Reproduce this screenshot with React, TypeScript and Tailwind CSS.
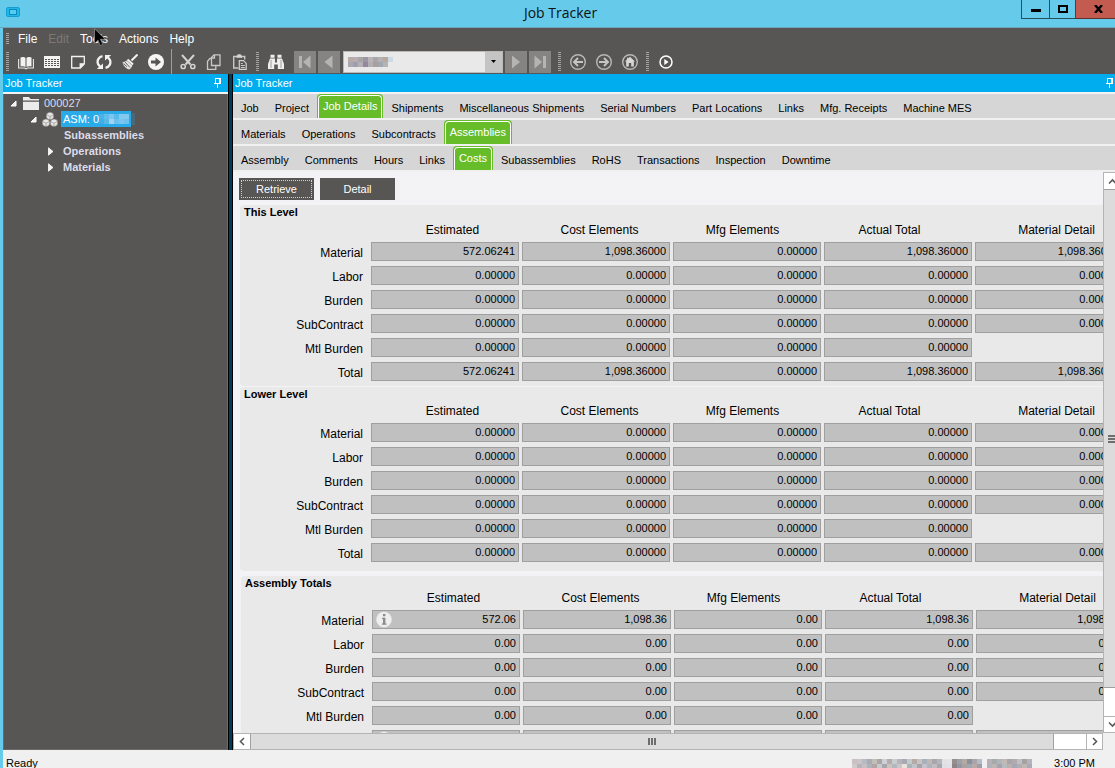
import { useState } from 'react';
import type { ReactNode } from 'react';

const LEVEL_ROWS = ['Material', 'Labor', 'Burden', 'SubContract', 'Mtl Burden', 'Total'];

// Captions are not centred on their fields, each column leans its own way
const COLUMNS = [
  { name: 'Estimated', align: 'pl-4' },
  { name: 'Cost Elements', align: 'pl-2' },
  { name: 'Mfg Elements', align: 'pr-2' },
  { name: 'Actual Total', align: 'pr-4' },
  { name: 'Material Detail', align: 'pl-4' },
];

const THIS_LEVEL = [
  ['572.06241', '1,098.36000', '0.00000', '1,098.36000', '1,098.36000'],
  ['0.00000', '0.00000', '0.00000', '0.00000', '0.00000'],
  ['0.00000', '0.00000', '0.00000', '0.00000', '0.00000'],
  ['0.00000', '0.00000', '0.00000', '0.00000', '0.00000'],
  ['0.00000', '0.00000', '0.00000', '0.00000'],
  ['572.06241', '1,098.36000', '0.00000', '1,098.36000', '1,098.36000'],
];

const LOWER_LEVEL = [
  ['0.00000', '0.00000', '0.00000', '0.00000', '0.00000'],
  ['0.00000', '0.00000', '0.00000', '0.00000', '0.00000'],
  ['0.00000', '0.00000', '0.00000', '0.00000', '0.00000'],
  ['0.00000', '0.00000', '0.00000', '0.00000', '0.00000'],
  ['0.00000', '0.00000', '0.00000', '0.00000'],
  ['0.00000', '0.00000', '0.00000', '0.00000', '0.00000'],
];

const ASSEMBLY_TOTALS = [
  ['572.06', '1,098.36', '0.00', '1,098.36', '1,098.36'],
  ['0.00', '0.00', '0.00', '0.00', '0.00'],
  ['0.00', '0.00', '0.00', '0.00', '0.00'],
  ['0.00', '0.00', '0.00', '0.00', '0.00'],
  ['0.00', '0.00', '0.00', '0.00'],
  ['572.06', '1,098.36', '0.00', '1,098.36', '1,098.36'],
];

const MAIN_TABS = [
  'Job', 'Project', 'Job Details', 'Shipments', 'Miscellaneous Shipments', 'Serial Numbers',
  'Part Locations', 'Links', 'Mfg. Receipts', 'Machine MES',
];
const DETAIL_TABS = ['Materials', 'Operations', 'Subcontracts', 'Assemblies'];
const ASSEMBLY_TABS = [
  'Assembly', 'Comments', 'Hours', 'Links', 'Costs', 'Subassemblies', 'RoHS', 'Transactions',
  'Inspection', 'Downtime',
];

function Grip() {
  return (
    <svg className="ml-[3px] mr-1 shrink-0" width="3" height="19" shapeRendering="crispEdges" aria-hidden="true">
      <path d="M1.5 0V19" stroke="#a5a4a3" strokeWidth="3" strokeDasharray="1 1" />
    </svg>
  );
}

function ToolButton({ label, children }: { label: string; children: ReactNode }) {
  return (
    <button type="button" aria-label={label} className="flex h-6 w-[26px] shrink-0 items-center justify-center">
      <svg width="16" height="16" viewBox="0 0 16 16" fill="none" aria-hidden="true">
        {children}
      </svg>
    </button>
  );
}

function NavButton({ label, children }: { label: string; children: ReactNode }) {
  return (
    <button type="button" aria-label={label} className="flex size-[22px] shrink-0 items-center justify-center bg-[#868483]">
      <svg width="16" height="16" viewBox="0 0 16 16" fill="#b5b4b3" aria-hidden="true">
        {children}
      </svg>
    </button>
  );
}

function Mosaic({ colors, cell, className }: { colors: string[]; cell: number; className?: string }) {
  const columns = Math.max(...colors.map((row) => row.split(' ').length));
  return (
    <svg
      className={className}
      width={columns * cell}
      height={colors.length * cell}
      shapeRendering="crispEdges"
      aria-hidden="true"
    >
      {colors.map((row, y) =>
        row.split(' ').map((color, x) =>
          color === '-' ? null : (
            <rect key={`${x}-${y}`} x={x * cell} y={y * cell} width={cell} height={cell} fill={`#${color}`} />
          ),
        ),
      )}
    </svg>
  );
}

function Pin() {
  return (
    <svg width="8" height="10" viewBox="0 0 8 10" shapeRendering="crispEdges" aria-hidden="true">
      <path d="M1.5 5V.5H6V5M5.5 1V5M0 5.5H7M3.5 6V9.5" stroke="#fff" fill="none" />
    </svg>
  );
}

function PaneHeader({ className }: { className: string }) {
  return (
    <div className={`flex h-5 shrink-0 items-center justify-between border-b-2 border-[#f3f3f6] bg-[#00adef] pl-0.5 text-white ${className}`}>
      <h2 className="text-[11px]">Job Tracker</h2>
      <button type="button" aria-label="Pin panel">
        <Pin />
      </button>
    </div>
  );
}

function TabRow({ tabs, initial, label }: { tabs: string[]; initial: string; label: string }) {
  const [active, setActive] = useState(initial);
  return (
    <div
      role="tablist"
      aria-label={label}
      className="flex h-[26px] shrink-0 border-b-2 border-[#f0f0f0] bg-[#d6d6d6] text-[11px]"
    >
      {tabs.map((tab) =>
        tab === active ? (
          <button
            key={tab}
            type="button"
            role="tab"
            aria-selected="true"
            className="h-6 shrink-0 rounded-t border border-b-0 border-[#66bc29] bg-[#66bc29] text-white"
          >
            <span className="block h-[23px] rounded-t-sm border border-b-0 border-white px-1 leading-5">{tab}</span>
          </button>
        ) : (
          <button
            key={tab}
            type="button"
            role="tab"
            aria-selected="false"
            className="shrink-0 px-2 pt-1 leading-5"
            onClick={() => setActive(tab)}
          >
            {tab}
          </button>
        ),
      )}
    </div>
  );
}

interface CostGroupProps {
  title: string;
  values: string[][];
  titleClass: string;
  className: string;
  info?: boolean;
}

function CostGroup({ title, values, titleClass, className, info }: CostGroupProps) {
  return (
    <section className={`w-[900px] rounded-tl rounded-bl bg-[#e9e9e9] ${className}`}>
      <h3 className={`pl-1 text-[11px] leading-[14px] font-bold ${titleClass}`}>{title}</h3>
      <table className="table-fixed border-separate border-spacing-0 text-xs">
        <thead>
          <tr className="h-6">
            <td className="w-[131px]" />
            {COLUMNS.map((column) => (
              <th key={column.name} scope="col" className="w-[151px] pr-1 align-middle font-normal">
                <span className={`block ${column.align}`}>{column.name}</span>
              </th>
            ))}
          </tr>
        </thead>
        <tbody>
          {LEVEL_ROWS.map((row, i) => (
            <tr key={row} className="h-6 align-top">
              <th scope="row" className="pt-px pr-2 text-right leading-5 font-normal">
                {row}
              </th>
              {values[i].map((value, j) => (
                <td key={COLUMNS[j].name} className="relative">
                  <input
                    readOnly
                    aria-label={`${title} ${row} ${COLUMNS[j].name}`}
                    value={value}
                    className="block h-[19px] w-[148px] border border-[#9f9f9f] bg-[#c0c0c0] pr-[3px] pb-0.5 text-right text-[11px]"
                  />
                  {info && j === 0 && (i === 0 || i === 5) && (
                    <svg className="absolute top-px left-1" width="16" height="17" viewBox="0 0 16 17" aria-hidden="true">
                      <circle cx="8" cy="8.5" r="7.7" fill="#efefef" stroke="#dcdcdc" strokeWidth=".6" />
                      <path d="M7 3h2.4v2.2H7zM6 6.8h3.4v5.6h1.2v1.3H5.8v-1.3H7V8H6z" fill="#8b8b8b" />
                    </svg>
                  )}
                </td>
              ))}
            </tr>
          ))}
        </tbody>
      </table>
    </section>
  );
}

function Chevron({ d }: { d: string }) {
  return (
    <svg width="9" height="9" viewBox="0 0 9 9" fill="none" aria-hidden="true">
      <path d={d} stroke="#5a5a5a" strokeWidth="1.6" />
    </svg>
  );
}

function Expander({ open }: { open?: boolean }) {
  return open ? (
    <svg width="7" height="7" viewBox="0 0 7 7" aria-hidden="true">
      <path d="M6 1V6H1z" fill="#f0f0f0" stroke="#fff" />
    </svg>
  ) : (
    <svg width="6" height="9" viewBox="0 0 6 9" aria-hidden="true">
      <path d="M.5.8V8.2L5 4.5z" fill="#f4f4f4" stroke="#fff" strokeWidth=".8" />
    </svg>
  );
}

function JobTree() {
  return (
    <ul className="grow border border-t-0 border-[#6c6a68] bg-[#585654] pt-px text-[11px] leading-4 text-[#dcdcea]">
      <li>
        <div className="flex h-4 items-center pl-1.5">
          <Expander open />
          <svg className="mr-[5px] ml-1.5" width="16" height="13" viewBox="0 0 16 13" aria-hidden="true">
            <path d="M0 0h6l1.5 2H16v1.5H0zM0 4.7h16V13H0z" fill="#ececec" />
          </svg>
          <span>000027</span>
        </div>
        <ul>
          <li>
            <div className="flex h-4 items-center pl-[26px]">
              <Expander open />
              <svg className="mr-[3px] ml-[5px]" width="16" height="15" viewBox="0 0 16 15" aria-hidden="true">
                <g fill="#e6e6e6" stroke="#77716c" strokeWidth=".6">
                  <circle cx="8" cy="4" r="3.8" />
                  <circle cx="4" cy="10.8" r="3.8" />
                  <circle cx="12" cy="10.8" r="3.8" />
                </g>
                <path
                  d="M5 3l3 1.5L11 3M8 4.5v3M1 9.8l3 1.5 3-1.5M4 11.3v3M9 9.8l3 1.5 3-1.5M12 11.3v3"
                  stroke="#8a8582"
                  strokeWidth=".6"
                  fill="none"
                />
              </svg>
              <span className="flex h-4 w-[70px] items-center bg-[#29abe9] pl-0.5 text-white">
                ASM: 0
                <Mosaic
                  cell={5}
                  colors={['46b4e8 62bdea 7cc5ec 58baea 84c9ee 84c9ee', '3eb0e6 56b8e9 9ed3f1 6cc0eb 79c5ee 6ec1ec']}
                />
              </span>
              <span className="h-3 w-1 bg-[#4b6878]" />
            </div>
            <ul className="font-bold">
              <li className="h-4 pl-[60px]">Subassemblies</li>
              <li className="flex h-4 items-center gap-[9px] pl-11">
                <Expander />
                Operations
              </li>
              <li className="flex h-4 items-center gap-[9px] pl-11">
                <Expander />
                Materials
              </li>
            </ul>
          </li>
        </ul>
      </li>
    </ul>
  );
}

function TitleBar() {
  return (
    <header className="flex h-7 shrink-0 items-start border-b border-[#6fa5b8] bg-[#66caea]">
      <div className="flex h-full flex-1 items-center pl-1.5">
        <svg className="mb-1" width="14" height="10" viewBox="0 0 14 10" aria-hidden="true">
          <rect x=".5" y=".5" width="13" height="9" rx="1.5" fill="#1cb9ec" stroke="#159cd0" />
          <rect x="3.5" y="2.5" width="7" height="5" fill="#55cdf2" stroke="#1187b4" />
        </svg>
      </div>
      <h1 className="font-['Open_Sans','Noto_Sans',sans-serif] text-sm leading-[26px] text-[#111]">Job Tracker</h1>
      <div className="flex flex-1 justify-end">
        <button type="button" aria-label="Minimize" className="flex h-[19px] w-7 items-center justify-center border border-t-0 border-r-0 border-[#24515f]">
          <span className="mt-0.5 h-[3px] w-2.5 bg-black" />
        </button>
        <button type="button" aria-label="Maximize" className="flex h-[19px] w-[27px] items-center justify-center border border-t-0 border-[#24515f]">
          <span className="h-2 w-2.5 border-2 border-black" />
        </button>
        <button type="button" aria-label="Close" className="flex h-[19px] w-[39px] items-center justify-center border-b border-[#5f2f2b] bg-[#c35b50] pl-1.5">
          <svg width="9" height="8" viewBox="0 0 9 8" aria-hidden="true">
            <path d="M1 0l7 8M8 0L1 8" stroke="#000" strokeWidth="2.4" />
          </svg>
        </button>
      </div>
    </header>
  );
}

function MenuBar() {
  return (
    <nav className="relative flex h-[21px] shrink-0 items-center gap-[11px] bg-[#585654] text-xs text-white">
      <svg className="-mr-0.5 ml-[3px] shrink-0" width="3" height="11" shapeRendering="crispEdges" aria-hidden="true">
        <path d="M1.5 0V11" stroke="#a5a4a3" strokeWidth="3" strokeDasharray="1 1" />
      </svg>
      <button type="button">File</button>
      <button type="button" disabled className="text-[#7b7978]">Edit</button>
      <button type="button">Tools</button>
      <button type="button">Actions</button>
      <button type="button">Help</button>
      {/* mouse pointer */}
      <svg className="absolute top-0 left-[91px]" width="12" height="19" viewBox="0 0 12 19" aria-hidden="true">
        <path d="M.5.7V15.5L4 12.3 6.3 17.6 8.8 16.5 6.5 11.3H11.3z" fill="#000" stroke="#8a8886" strokeWidth=".8" />
      </svg>
    </nav>
  );
}

function Toolbar() {
  return (
    <div role="toolbar" aria-label="Standard" className="flex h-[25px] shrink-0 items-center bg-[#585654]">
      <Grip />
      <ToolButton label="Open">
        <path d="M2.5 3.5C4.5 2.5 6.5 3 7.5 4v9C6 12 4.5 12 2.5 12.5zM13.5 3.5C11.5 2.5 9.5 3 8.5 4v9c1.5-1 3-1 5-.5z" fill="#f2f2f2" />
        <path d="M.6 5v9h6l1.4.8 1.4-.8h6V5" stroke="#e6e6e6" strokeWidth="1.1" />
      </ToolButton>
      <ToolButton label="List">
        <path d="M0 2h16v12H0z" fill="#f4f4f4" />
        <path
          d="M1 5.5h14M1 7.5h14M1 9.5h14M1 11.5h14"
          stroke="#585654"
          strokeWidth="1"
          strokeDasharray="2 1"
          shapeRendering="crispEdges"
        />
      </ToolButton>
      <ToolButton label="New">
        <path d="M1.7 2.5h12.6v7.5l-4 4H1.7zM14 9.8h-3.8V14" stroke="#f2f2f2" strokeWidth="1.3" />
        <path d="M10.2 14l4-4.2h-4z" fill="#f2f2f2" />
      </ToolButton>
      <ToolButton label="Refresh">
        <path d="M6.5 2.2C2.5 3 .8 6.5 2 10l2.3 3M9.5 13.8c4-.8 5.7-4.3 4.5-7.8L11.7 3" stroke="#f2f2f2" strokeWidth="2.3" />
        <path d="M7 9.5V15H.8zM9 6.5V1h6.2z" fill="#f2f2f2" />
      </ToolButton>
      <ToolButton label="Clear">
        <path d="M15.5.5L9.5 6.5" stroke="#f2f2f2" strokeWidth="2" />
        <path d="M5.5 5.5l5.5 5" stroke="#f2f2f2" strokeWidth="2" />
        <path d="M4.5 6.5c-1 1-2.5 1.5-4 1.5.5 3 3 6.5 6.5 7.5 1.8-1 3-2.5 3.3-4z" fill="#e6e6e6" />
        <path d="M3 8l5 5.5M1.5 9.5L5 12.8" stroke="#585654" strokeWidth=".9" />
      </ToolButton>
      <ToolButton label="Go">
        <circle cx="8" cy="8" r="8" fill="#f6f6f6" />
        <path d="M3 6.6h4.5V3.5L13 8l-5.5 4.5V9.4H3z" fill="#585654" />
      </ToolButton>
      <span className="mr-[3px] ml-0.5 h-full w-px shrink-0 bg-[#a09e9c]" />
      <ToolButton label="Cut">
        <path d="M2 1l8.5 9.5M14 1L5.5 10.5" stroke="#d4d4d4" strokeWidth="1.9" />
        <circle cx="3.2" cy="12.5" r="2.1" stroke="#d4d4d4" strokeWidth="1.5" />
        <circle cx="12.8" cy="12.5" r="2.1" stroke="#d4d4d4" strokeWidth="1.5" />
      </ToolButton>
      <ToolButton label="Copy">
        <path d="M5.5 11.5V3.5L8 .8h6v10.7z" stroke="#c8c8c8" strokeWidth="1.3" />
        <path d="M5.5 4.5H4L1.5 7.3v8h8.3v-3.8M5.5 4H8.5V1" stroke="#c8c8c8" strokeWidth="1.3" />
      </ToolButton>
      <ToolButton label="Paste">
        <path d="M6.5 14H1.7V2.5h11V5.5" stroke="#c8c8c8" strokeWidth="1.4" />
        <path d="M4.5 3.8V2L6 .3h2.5L10 2v1.8z" fill="#d4d4d4" />
        <path d="M7.3 6.7h4.2l2.7 2.7v5.9H7.3z" stroke="#d0d0d0" strokeWidth="1.2" />
        <path d="M8.8 9.5h2M8.8 11.5h4M8.8 13.5h4" stroke="#c8c8c8" />
      </ToolButton>
      <Grip />
      <ToolButton label="Search">
        <path d="M2.5.8h4v3h-4zM9.5.8h4v3h-4zM2 4.5h5v4h2v-4h5l2 5.5v5H9.8v-4.5H6.2V15H0v-5z" fill="#efefef" />
        <path d="M3 6v8M13 6v8" stroke="#8c8a88" strokeWidth=".8" />
      </ToolButton>
      <div className="mr-1 ml-[5px] flex items-center gap-0.5">
        <NavButton label="First record">
          <path d="M2 2h3v12H2zM13.5 1.5v13L6 8z" />
        </NavButton>
        <NavButton label="Previous record">
          <path d="M11.5 1.5v13L3.5 8z" />
        </NavButton>
        <div className="relative ml-px flex h-[22px] w-40 items-center border border-[#b9b9b9] bg-[#e9e9e9]">
          <select aria-label="Job" className="absolute inset-0 w-full appearance-none opacity-0">
            <option aria-label="Current job" />
          </select>
          <Mosaic
            className="pointer-events-none ml-1"
            cell={5}
            colors={[
              'b8aaa6 b6adb4 a9a4a8 9a96a4 b9b4b8 a8a6a8 b5b0b2 b5aaa2 cdd9e4',
              'aaa8ae a09db0 b3b1b6 93889c b2aeb4 a8a09f a0a7b0 b3b4b8 -',
            ]}
          />
          <span className="pointer-events-none ml-auto flex h-full w-[17px] items-center justify-center bg-[#c4c4c4]">
            <svg width="5" height="3" viewBox="0 0 5 3" aria-hidden="true">
              <path d="M0 0h5L2.5 3z" />
            </svg>
          </span>
        </div>
        <NavButton label="Next record">
          <path d="M4 1.5v13L12 8z" />
        </NavButton>
        <NavButton label="Last record">
          <path d="M11 2h3v12h-3zM2.5 1.5v13L10 8z" />
        </NavButton>
      </div>
      <Grip />
      <ToolButton label="Back">
        <circle cx="8" cy="8" r="7.3" stroke="#b9b8b7" strokeWidth="1.4" />
        <path d="M13 8H4.5M8 4L4 8l4 4" stroke="#c6c5c4" strokeWidth="1.9" />
      </ToolButton>
      <ToolButton label="Forward">
        <circle cx="8" cy="8" r="7.3" stroke="#b9b8b7" strokeWidth="1.4" />
        <path d="M3 8h8.5M8 4l4 4-4 4" stroke="#c6c5c4" strokeWidth="1.9" />
      </ToolButton>
      <ToolButton label="Home">
        <circle cx="8" cy="8" r="7.3" stroke="#b9b8b7" strokeWidth="1.4" />
        <path d="M8 2.8L13 7.5h-1.2V12.5H9.2V9H6.8v3.5H4.2v-5H3L5 5.5V3.8h1.3v.6z" fill="#d8d7d6" />
      </ToolButton>
      <Grip />
      <ToolButton label="Run">
        <circle cx="8" cy="8" r="6" stroke="#fff" strokeWidth="1.5" />
        <path d="M6.3 5v6L10.6 8z" fill="#fff" />
      </ToolButton>
    </div>
  );
}

function VerticalScrollbar() {
  return (
    <div className="flex w-3 shrink-0 flex-col overflow-hidden border-l border-[#b4b4b4] bg-white">
      <button type="button" aria-label="Scroll up" className="flex h-[17px] w-4 shrink-0 items-center justify-center border-t border-[#b4b4b4]">
        <Chevron d="M1 6.5L4.5 3 8 6.5" />
      </button>
      <div className="flex w-4 grow items-center justify-center border-y border-[#a0a0a0] bg-[#dcdcdc]">
        <svg width="8" height="8" shapeRendering="crispEdges" aria-hidden="true">
          <path d="M0 1H8M0 4H8M0 7H8" stroke="#6e6e6e" strokeWidth="2" />
        </svg>
      </div>
      <div className="h-7 shrink-0" />
      <button type="button" aria-label="Scroll down" className="flex h-[17px] w-4 shrink-0 items-center justify-center border-y border-[#b4b4b4]">
        <Chevron d="M1 2.5L4.5 6 8 2.5" />
      </button>
    </div>
  );
}

function HorizontalScrollbar() {
  return (
    <div className="flex h-[17px] shrink-0 bg-[#f0f0f0] pr-3">
      <div className="flex grow border border-[#b4b4b4] bg-white">
        <button type="button" aria-label="Scroll left" className="flex w-4 items-center justify-center">
          <Chevron d="M6 1L2.5 4.5 6 8" />
        </button>
        <div className="flex grow items-center justify-center border-x border-[#a0a0a0] bg-[#dcdcdc]">
          <svg width="8" height="7" shapeRendering="crispEdges" aria-hidden="true">
            <path d="M1 0V7M4 0V7M7 0V7" stroke="#6e6e6e" strokeWidth="2" />
          </svg>
        </div>
        <div className="w-8" />
        <button type="button" aria-label="Scroll right" className="flex w-4 items-center justify-center border-l border-[#b4b4b4]">
          <Chevron d="M3 1L6.5 4.5 3 8" />
        </button>
      </div>
    </div>
  );
}

export default function App() {
  return (
    <div className="flex h-screen flex-col overflow-hidden bg-[#f0f0f0] font-['Liberation_Sans',Arial,sans-serif] text-black">
      <TitleBar />
      <div className="flex min-h-0 grow flex-col border-l-[3px] border-[#66caea]">
        <MenuBar />
        <Toolbar />
        <main className="flex min-h-0 grow">
          <aside className="flex w-[225px] shrink-0 flex-col">
            <PaneHeader className="pr-1.5" />
            <JobTree />
          </aside>
          <div className="w-[5px] shrink-0 border-x border-black bg-[#003a5c]" />
          <section className="flex min-w-0 grow flex-col">
            <PaneHeader className="pr-px" />
            <TabRow label="Job" tabs={MAIN_TABS} initial="Job Details" />
            <TabRow label="Job details" tabs={DETAIL_TABS} initial="Assemblies" />
            <TabRow label="Assembly" tabs={ASSEMBLY_TABS} initial="Costs" />
            <div className="flex min-h-0 grow">
              <div className="min-w-0 grow overflow-hidden bg-[#f3f3f6] pt-1.5 pl-[7px]">
                <div className="-ml-px mb-[5px] flex gap-1.5 text-[11px] text-white">
                  <button type="button" className="h-[22px] w-[75px] bg-[#585654] p-0.5">
                    <span className="block border border-dotted border-[#d0d0d0] leading-4">Retrieve</span>
                  </button>
                  <button type="button" className="h-[22px] w-[75px] bg-[#585654]">
                    Detail
                  </button>
                </div>
                <CostGroup title="This Level" values={THIS_LEVEL} titleClass="h-[13px]" className="mb-px" />
                <CostGroup title="Lower Level" values={LOWER_LEVEL} titleClass="h-3" className="mb-[5px] pb-1" />
                <CostGroup title="Assembly Totals" values={ASSEMBLY_TOTALS} titleClass="h-2.5" className="ml-px" info />
              </div>
              <VerticalScrollbar />
            </div>
            <HorizontalScrollbar />
          </section>
        </main>
        <footer className="flex h-[18px] shrink-0 items-start overflow-hidden bg-[#f0f0f0] pr-5 pl-[3px] text-[11px] leading-[26px]">
          <span className="mr-auto">Ready</span>
          <Mosaic
            className="mt-[9px] mr-[22px]"
            cell={5}
            colors={[
              'c9c1c4 cdc4c5 b7b9c4 a9adb3 c1bdb8 aaa6a8 cdd0d6 b5aca9 c8cdd0 b9b4bb a6abb3 c4c9c9 b4aaa6 c8c4c4 a9b0b9 bfb8b4 a9a6ac b4b7ba e0e2e5 e4e4e6 968e8d 9da1ac b3aba0 8d909d a7a5a8 b5bcc6 - b8b0b6 a7aaaa b0b5bc c2b9b4 a5a5ae b4aaac bcc0c8 a6a29f b5b4bd',
              'd0cacb b5b4bd c7bfc0 abb4bd b0a5a3 c7c9d0 a8a6aa c9c4c0 b1b6bf ccc4c6 e9e4dd a9b4b7 bfc4cc a8a4a5 c4c2cb aeb5b9 c0bdc2 a5a8b0 dfe0e4 e2e2e4 8b8789 9498a4 a9a29f 9ea7b5 b7aaa4 9a9faa - aeb3b9 bdb5b2 a7a3ad b5bcc0 bbb0ac a3a9b4 b2aeb4 c0b7b5 aaaab4',
            ]}
          />
          <span>3:00 PM</span>
        </footer>
      </div>
    </div>
  );
}
